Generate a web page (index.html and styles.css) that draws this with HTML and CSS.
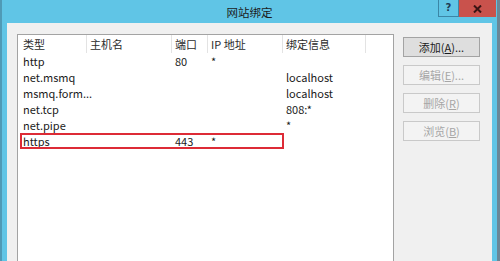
FILE: index.html
```html
<!DOCTYPE html>
<html lang="zh-CN">
<head>
    <meta charset="UTF-8">
    <title>网站绑定</title>
    <link rel="stylesheet" href="styles.css">
</head>
<body>
    <div class="window">
        <div class="titlebar">
            <span></span>
            <span class="title">网站绑定</span>
            <div class="caption-buttons">
                <span class="btn-help">?</span>
                <span class="btn-close">
                    <svg width="9" height="8" viewBox="0 0 9 8">
                        <path d="M1 0.5 L8 7.5 M8 0.5 L1 7.5" stroke="#3a1414" stroke-width="2" fill="none"/>
                    </svg>
                </span>
            </div>
        </div>
        <div class="client">
            <div class="listview">
                <div class="lv-header">
                    <span>类型</span>
                    <span>主机名</span>
                    <span>端口</span>
                    <span>IP 地址</span>
                    <span>绑定信息</span>
                    <span></span>
                </div>
                <div class="lv-row">
                    <span>http</span><span></span><span>80</span><span>*</span><span></span><span></span>
                </div>
                <div class="lv-row">
                    <span>net.msmq</span><span></span><span></span><span></span><span>localhost</span><span></span>
                </div>
                <div class="lv-row">
                    <span>msmq.form...</span><span></span><span></span><span></span><span>localhost</span><span></span>
                </div>
                <div class="lv-row">
                    <span>net.tcp</span><span></span><span></span><span></span><span>808:*</span><span></span>
                </div>
                <div class="lv-row">
                    <span>net.pipe</span><span></span><span></span><span></span><span>*</span><span></span>
                </div>
                <div class="lv-row marked">
                    <span>https</span><span></span><span>443</span><span>*</span><span></span><span></span>
                </div>
            </div>
            <div class="side-buttons">
                <div class="button">添加(<u>A</u>)...</div>
                <div class="button disabled">编辑(<u>E</u>)...</div>
                <div class="button disabled">删除(<u>R</u>)</div>
                <div class="button disabled">浏览(<u>B</u>)</div>
            </div>
        </div>
    </div>
</body>
</html>
```

FILE: styles.css
```css
body {
    margin: 0;
    padding: 0;
    font-family: "Noto Sans CJK SC", "Noto Sans", sans-serif;
    font-size: 11px;
    color: #1a1a1a;
}
.window {
    width: 500px;
    height: 261px;
    box-sizing: border-box;
    background: #60c5e6;
    border-left: 2px solid #4f9ab6;
    border-right: 3px solid #6a8797;
    display: flex;
    flex-direction: column;
    overflow: hidden;
}
.titlebar {
    height: 23px;
    flex: none;
    display: grid;
    grid-template-columns: 1fr auto 1fr;
    align-items: start;
}
.titlebar .title {
    line-height: 24px;
    font-size: 11.5px;
    color: #1c1c1c;
}
.caption-buttons {
    justify-self: end;
    display: flex;
    margin-right: 1px;
}
.btn-help {
    width: 21px;
    height: 17px;
    box-sizing: border-box;
    border: 1px solid #3b86a6;
    border-top: none;
    text-align: center;
    font-family: "DejaVu Sans", sans-serif;
    font-weight: bold;
    font-size: 10px;
    line-height: 15px;
    color: #1d3b55;
}
.btn-close {
    width: 37px;
    height: 17px;
    background: #c9524c;
    display: flex;
    align-items: center;
    justify-content: center;
}
.client {
    flex: 1;
    margin: 0 5px;
    background: #f0f0f0;
    padding: 11px 12px 0 10px;
    display: flex;
    align-items: flex-start;
    gap: 9px;
    overflow: hidden;
}
.listview {
    width: 377px;
    height: 260px;
    flex: none;
    box-sizing: border-box;
    background: #fff;
    border: 1px solid #a3a3a3;
}
.lv-header,
.lv-row {
    display: grid;
    grid-template-columns: 69px 85px 36px 75px 83px 1fr;
}
.lv-header span {
    height: 18px;
    line-height: 18px;
    padding-left: 3px;
    border-right: 1px solid #e3e3e3;
    color: #2b2b2b;
    white-space: nowrap;
}
.lv-row span {
    height: 16px;
    line-height: 16px;
    padding-left: 3px;
    white-space: nowrap;
}
.lv-header span:first-child,
.lv-row span:first-child {
    padding-left: 5px;
}
.lv-header span:last-child {
    border-right: none;
}
.lv-row.marked {
    position: relative;
}
.lv-row.marked::after {
    content: "";
    position: absolute;
    left: 2px;
    top: 0;
    width: 264px;
    height: 16px;
    box-sizing: border-box;
    border: 2px solid #dd2b36;
}
.side-buttons {
    margin-top: 3px;
    display: flex;
    flex-direction: column;
    gap: 8px;
}
.button {
    width: 77px;
    height: 20px;
    box-sizing: border-box;
    border: 1px solid #a3a3a3;
    background: #dedede;
    text-align: center;
    line-height: 18px;
    color: #1a1a1a;
}
.button.disabled {
    background: #f3f3f3;
    border-color: #c9c9c9;
    color: #a6a6a6;
}
```
